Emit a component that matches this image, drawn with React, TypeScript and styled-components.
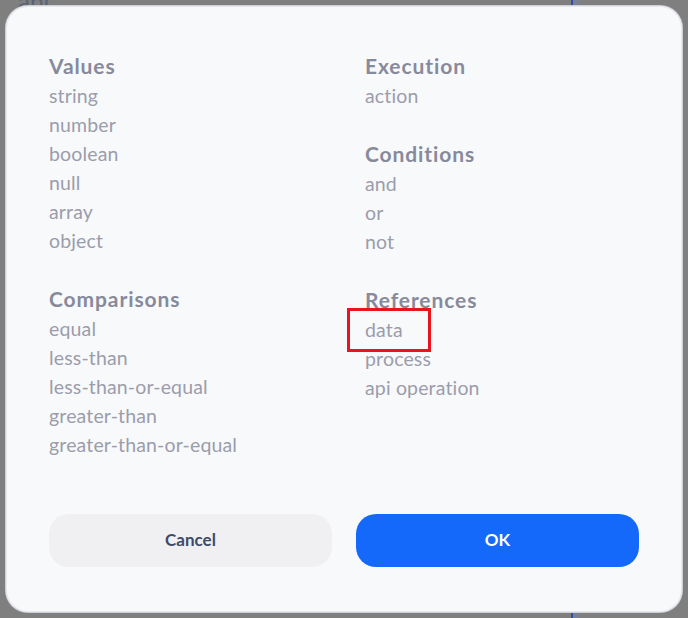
import React from "react";
import styled, { createGlobalStyle } from "styled-components";

const Global = createGlobalStyle`
  html, body { margin: 0; padding: 0; }
  body { font-family: Lato, "Open Sans", sans-serif; }
`;

const Backdrop = styled.div`
  position: relative;
  width: 688px;
  height: 618px;
  box-sizing: border-box;
  padding: 6px;
  background: #7f7f7f;
  overflow: hidden;
`;

const GhostText = styled.span`
  position: absolute;
  left: 18px;
  top: -14px;
  font-size: 24px;
  color: #5a6275;
  font-family: Lato, sans-serif;
`;

const GhostLine = styled.div<{ $x: number }>`
  position: absolute;
  left: ${(p) => p.$x}px;
  top: 0;
  bottom: 0;
  width: 2px;
  background: #2c4fa0;
`;

const GhostStripe = styled.div<{ $x: number }>`
  position: absolute;
  left: ${(p) => p.$x}px;
  top: 0;
  bottom: 0;
  width: 6px;
  background: #7a7f93;
`;

const Modal = styled.div`
  position: relative;
  height: 100%;
  box-sizing: border-box;
  background: #f8f9fb;
  border-radius: 22px;
  box-shadow: inset 0 0 0 1px #e6e8ec, 0 0 0 1px #cfd1d6;
  padding: 45px 43px 43px;
  display: flex;
  flex-direction: column;
`;

const Columns = styled.div`
  display: grid;
  grid-template-columns: 1fr 1fr;
  column-gap: 42px;
`;

const Column = styled.div`
  display: flex;
  flex-direction: column;
  gap: 29px;
`;

const Section = styled.div`
  display: flex;
  flex-direction: column;
`;

const Heading = styled.div`
  font-size: 21px;
  font-weight: 700;
  letter-spacing: 0.9px;
  line-height: 30px;
  color: #878a9b;
`;

const Item = styled.div<{ $marked?: boolean }>`
  position: relative;
  font-size: 19.5px;
  letter-spacing: 0.15px;
  line-height: 29px;
  color: #9b9dab;
  width: fit-content;
  ${(p) =>
    p.$marked &&
    `
    &::after {
      content: "";
      position: absolute;
      left: -18px;
      top: -7px;
      width: 84px;
      height: 44px;
      box-sizing: border-box;
      border: 3px solid #e8141e;
    }
  `}
`;

const Buttons = styled.div`
  margin-top: auto;
  display: grid;
  grid-template-columns: 1fr 1fr;
  column-gap: 24px;
  margin-bottom: 2px;
`;

const Button = styled.button<{ $primary?: boolean }>`
  height: 53px;
  border: none;
  border-radius: 20px;
  font-family: Lato, sans-serif;
  font-size: 17px;
  font-weight: 700;
  padding: 0 0 3px;
  background: ${(p) => (p.$primary ? "#1469fa" : "#f0f0f2")};
  color: ${(p) => (p.$primary ? "#ffffff" : "#3d4a6b")};
  cursor: pointer;
`;

type Sec = { title: string; items: string[] };

const left: Sec[] = [
  { title: "Values", items: ["string", "number", "boolean", "null", "array", "object"] },
  {
    title: "Comparisons",
    items: ["equal", "less-than", "less-than-or-equal", "greater-than", "greater-than-or-equal"],
  },
];

const right: Sec[] = [
  { title: "Execution", items: ["action"] },
  { title: "Conditions", items: ["and", "or", "not"] },
  { title: "References", items: ["data", "process", "api operation"] },
];

const renderColumn = (secs: Sec[]) => (
  <Column>
    {secs.map((s) => (
      <Section key={s.title}>
        <Heading>{s.title}</Heading>
        {s.items.map((it) => (
          <Item key={it} $marked={it === "data"}>
            {it}
          </Item>
        ))}
      </Section>
    ))}
  </Column>
);

export default function App() {
  return (
    <>
      <Global />
      <Backdrop>
        <GhostText>api</GhostText>
        <GhostLine $x={571} />
        <GhostStripe $x={573} />
        <Modal>
          <Columns>
            {renderColumn(left)}
            {renderColumn(right)}
          </Columns>
          <Buttons>
            <Button>Cancel</Button>
            <Button $primary>OK</Button>
          </Buttons>
        </Modal>
      </Backdrop>
    </>
  );
}
